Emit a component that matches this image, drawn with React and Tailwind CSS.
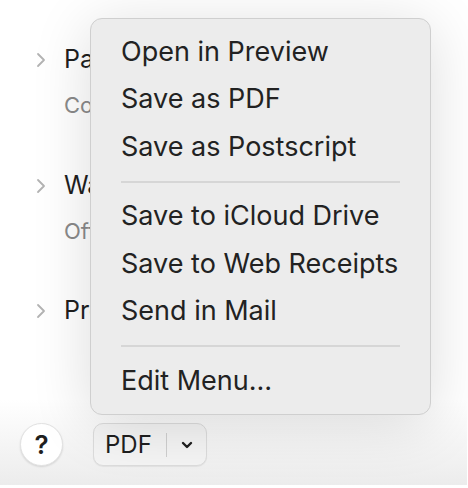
import React from "react";

const font = { fontFamily: "Inter, 'Liberation Sans', sans-serif" };

function Chevron() {
  return (
    <svg width="10" height="16" viewBox="0 0 10 16" className="shrink-0">
      <path d="M2 2l6 6-6 6" fill="none" stroke="#b3b3b3" strokeWidth="1.8" strokeLinecap="round" strokeLinejoin="round" />
    </svg>
  );
}

function Row({ title, sub }) {
  return (
    <div className="flex flex-col">
      <div className="flex items-center h-[32px]">
        <div className="w-[64px] flex justify-end pr-[18px]">
          <Chevron />
        </div>
        <span className="w-[26px] overflow-hidden whitespace-nowrap text-[25px] text-[#1f1f1f]">{title}</span>
      </div>
      {sub && (
        <div className="pl-[64px] h-[46px] flex items-end">
          <span className="w-[26px] overflow-hidden whitespace-nowrap text-[22px] text-[#8a8a8a]">{sub}</span>
        </div>
      )}
    </div>
  );
}

export default function App() {
  const groups = [
    ["Open in Preview", "Save as PDF", "Save as Postscript"],
    ["Save to iCloud Drive", "Save to Web Receipts", "Send in Mail"],
    ["Edit Menu…"],
  ];

  return (
    <div className="relative w-[468px] h-[488px] bg-white overflow-hidden" style={font}>
      {/* background list */}
      <div className="flex flex-col pt-[44px]">
        <Row title="Page Setup" sub="Configure" />
        <div className="h-[48px]" />
        <Row title="Watermark" sub="Off" />
        <div className="h-[47px]" />
        <Row title="Preview" />
      </div>

      {/* footer */}
      <div className="absolute left-0 right-[1px] top-[400px] h-[85px] bg-gradient-to-b from-white to-[#ececec] flex items-center gap-[30px] pl-[20px] pt-[4px]">
        <div className="w-[43px] h-[43px] rounded-full bg-white border border-[#e2e2e2] shadow-[0_1px_2px_rgba(0,0,0,0.12)] flex items-center justify-center text-[26px] font-semibold text-[#1f1f1f]">
          ?
        </div>
        <div className="h-[43px] w-[114px] rounded-[10px] border border-[#dcdcdc] bg-[#f4f4f4] flex items-center shadow-[0_1px_1px_rgba(0,0,0,0.06)]">
          <span className="pl-[11px] text-[24px] text-[#1f1f1f] w-[72px]">PDF</span>
          <div className="w-[1px] h-[24px] bg-[#cfcfcf]" />
          <div className="flex-1 flex justify-center">
            <svg width="14" height="10" viewBox="0 0 14 10">
              <path d="M3 3l4 4 4-4" fill="none" stroke="#1f1f1f" strokeWidth="2.4" strokeLinecap="round" strokeLinejoin="round" />
            </svg>
          </div>
        </div>
      </div>

      {/* menu */}
      <div className="absolute left-[90px] top-[18px] w-[341px] h-[397px] rounded-[12px] bg-[#ececec] border border-[#cfcfcf] shadow-[0_8px_60px_rgba(0,0,0,0.14)] py-[9px]">
        {groups.map((g, i) => (
          <div key={i}>
            {i > 0 && (
              <div className="h-[22px] flex items-center px-[30px]">
                <div className="h-[2px] w-full bg-[#d6d6d6]" />
              </div>
            )}
            {g.map((item) => (
              <div key={item} className="h-[47.5px] flex items-center pl-[30px] text-[27px] text-[#222222] whitespace-nowrap">
                {item}
              </div>
            ))}
          </div>
        ))}
      </div>
    </div>
  );
}
